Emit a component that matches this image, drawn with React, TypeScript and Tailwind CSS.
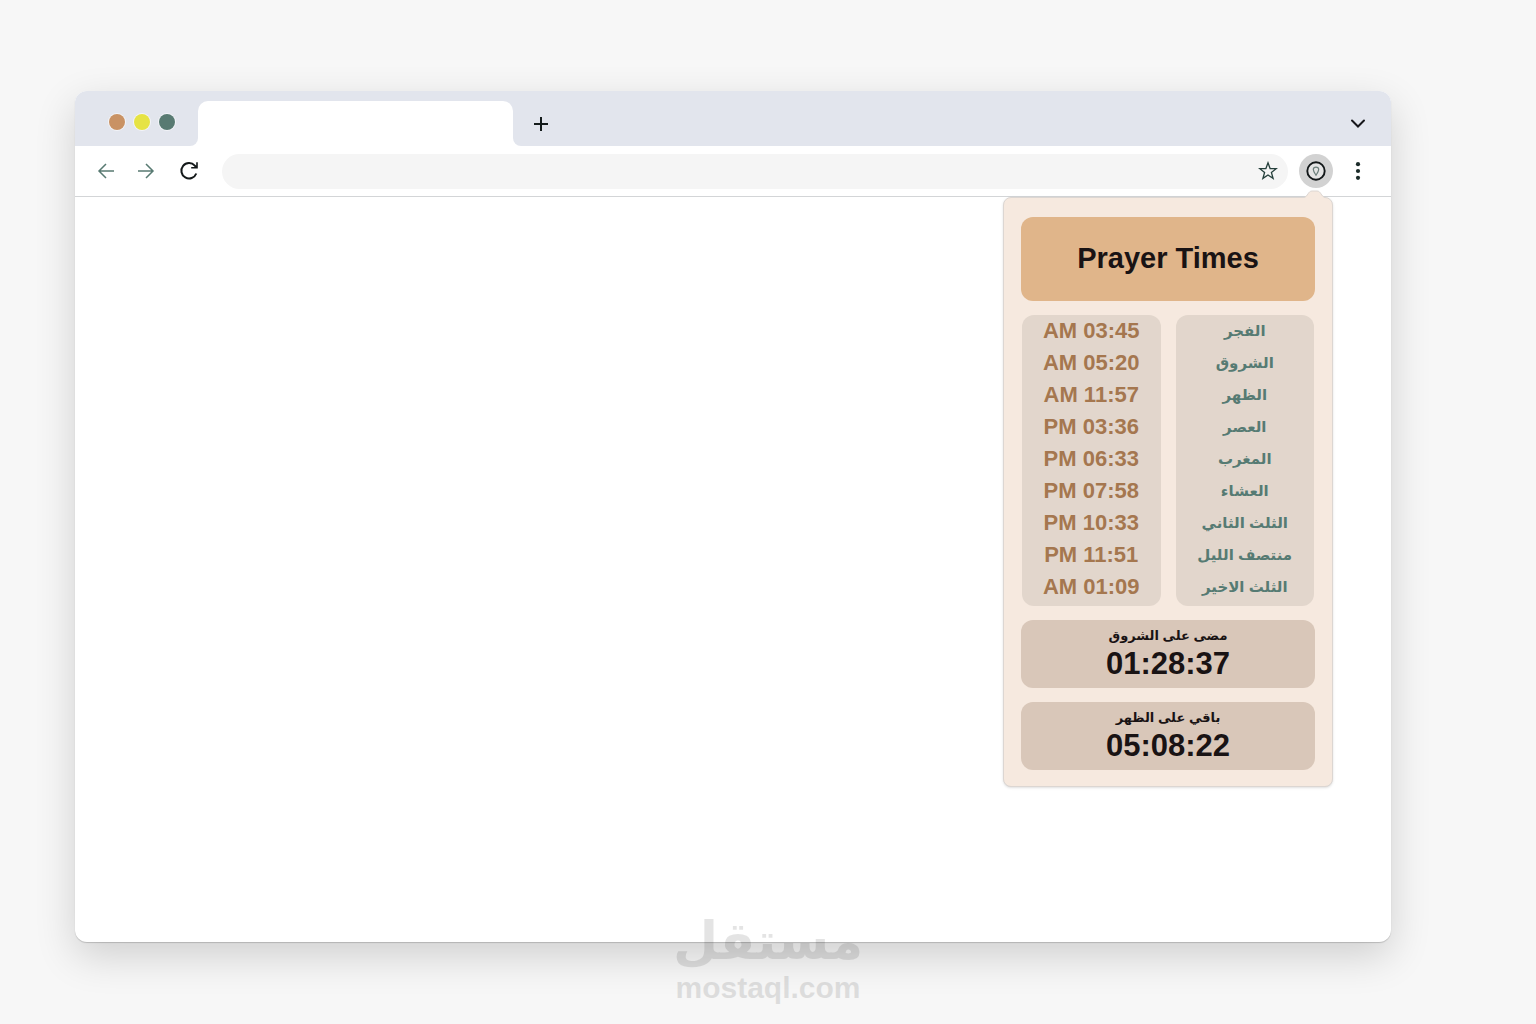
import { useState } from 'react';

const prayers = [
  { name: 'الفجر', time: 'AM 03:45' },
  { name: 'الشروق', time: 'AM 05:20' },
  { name: 'الظهر', time: 'AM 11:57' },
  { name: 'العصر', time: 'PM 03:36' },
  { name: 'المغرب', time: 'PM 06:33' },
  { name: 'العشاء', time: 'PM 07:58' },
  { name: 'الثلث الثاني', time: 'PM 10:33' },
  { name: 'منتصف الليل', time: 'PM 11:51' },
  { name: 'الثلث الاخير', time: 'AM 01:09' },
];

const counters = [
  { label: 'مضى على الشروق', value: '01:28:37' },
  { label: 'باقي على الظهر', value: '05:08:22' },
];

function TabStrip() {
  return (
    <div className="flex h-[55px] rounded-t-xl bg-white">
      <div className="flex w-[123px] items-center gap-[9px] rounded-tl-xl rounded-br-lg bg-[#e2e5ed] pt-[7px] pl-[34px]">
        <span className="h-4 w-4 rounded-full bg-[#c99264] ring-1 ring-white/60" />
        <span className="h-4 w-4 rounded-full bg-[#e6e344] ring-1 ring-white/60" />
        <span className="h-4 w-4 rounded-full bg-[#587a72] ring-1 ring-white/60" />
      </div>
      <div className="w-[315px] bg-[#e2e5ed] pt-[10px]">
        <button aria-label="Tab" className="block h-full w-full rounded-t-[10px] bg-white" />
      </div>
      <div className="flex flex-1 items-center justify-between rounded-tr-xl rounded-bl-lg bg-[#e2e5ed] pt-[10px] pr-6 pl-5">
        <button aria-label="New tab">
          <svg width="16" height="16" viewBox="0 0 16 16" fill="none" stroke="#151c1c" strokeWidth="2">
            <path d="M8 1v14M1 8h14" />
          </svg>
        </button>
        <button aria-label="Search tabs">
          <svg width="18" height="16" viewBox="0 0 18 16" fill="none" stroke="#17171b" strokeWidth="2" strokeLinecap="round">
            <path d="M3 4.500l6 6 6-6" />
          </svg>
        </button>
      </div>
    </div>
  );
}

function Toolbar({ open, onToggle }: { open: boolean; onToggle: () => void }) {
  const [address, setAddress] = useState('');

  return (
    <div className="flex h-[51px] items-center border-b border-[#d3d5d7] bg-white pr-6 pl-[22px]">
      <button aria-label="Back">
        <svg width="18" height="18" viewBox="0 0 18 18" fill="none" stroke="#587a72" strokeWidth="1.5">
          <path d="M17 9H2M9 2L2 9l7 7" />
        </svg>
      </button>
      <button aria-label="Forward" className="ml-[22px]">
        <svg width="18" height="18" viewBox="0 0 18 18" fill="none" stroke="#587a72" strokeWidth="1.5">
          <path d="M1 9h15M9 2l7 7-7 7" />
        </svg>
      </button>
      <button aria-label="Reload" className="ml-6">
        <svg width="20" height="20" viewBox="0 0 20 20" fill="none" stroke="#131819" strokeWidth="2">
          <path d="M17.300 12.500A7.700 7.700 0 1 1 15.800 4.600L17 6" />
          <path d="M18.800 1.300v6.200h-6.600V6h3.400l1.600-1.600V1.300z" fill="#131819" stroke="none" />
        </svg>
      </button>
      <div className="ml-[23px] flex h-[35px] flex-1 items-center rounded-full bg-[#f5f5f5] pr-[10px] pl-4">
        <input
          type="text"
          aria-label="Address"
          value={address}
          onChange={(e) => setAddress(e.target.value)}
          className="min-w-0 flex-1 bg-transparent text-sm outline-none"
        />
        <button aria-label="Bookmark">
          <svg width="20" height="20" viewBox="0 0 20 20" fill="none" stroke="#26403c" strokeWidth="1.3">
            <path d="M10 1.800l2.100 5.700 6.100.2-4.800 3.800 1.700 5.900-5.100-3.400-5.100 3.400 1.700-5.900L1.800 7.700l6.100-.2z" />
          </svg>
        </button>
      </div>
      <button
        aria-label="Prayer times extension"
        onClick={onToggle}
        aria-expanded={open}
        className="ml-[11px] flex h-[34px] w-[34px] items-center justify-center rounded-full bg-[#d2d2d2]"
      >
        <svg width="20" height="20" viewBox="0 0 20 20" fill="none">
          <circle cx="10" cy="10" r="8.7" fill="#e4e4e4" stroke="#131819" strokeWidth="1.9" />
          <path d="M10 14.200C8.400 11.600 7.300 10 7.300 8.400c0-1.400 1.200-2.300 2.700-2.300s2.700.9 2.700 2.300c0 1.600-1.100 3.200-2.700 5.800z" stroke="#6c7f7b" strokeWidth="1.2" />
        </svg>
      </button>
      <button aria-label="Menu" className="ml-4">
        <svg width="18" height="20" viewBox="0 0 18 20" fill="#1b2b29">
          <circle cx="9" cy="3.2" r="2.1" />
          <circle cx="9" cy="10" r="2.1" />
          <circle cx="9" cy="16.8" r="2.1" />
        </svg>
      </button>
    </div>
  );
}

function PrayerPopup() {
  return (
    <div className="absolute top-0 right-[58px] flex w-[330px] flex-col gap-[14px] rounded-lg border border-[#dcd6d2] bg-[#f6e9df] px-[17px] pt-[19px] pb-4 shadow-sm">
      <svg className="absolute -top-2 right-[5px]" width="24" height="10" viewBox="0 0 24 10">
        <path d="M1 7.500C5 6.500 5 1 9 1h5c4 0 4 5.500 8 6.500V10H1z" fill="#f6e9df" />
        <path d="M1 7.500C5 6.500 5 1 9 1h5c4 0 4 5.500 8 6.500" fill="none" stroke="#dcd6d2" />
      </svg>
      <h1 className="flex h-[84px] items-center justify-center rounded-xl bg-[#e0b58a] text-[29px] font-bold text-[#191314]">
        Prayer Times
      </h1>
      <div className="grid grid-cols-2 gap-[15px] px-px text-center font-bold">
        <ul className="rounded-xl bg-[#e2d6cc] pb-[3px] text-[22px] leading-8 text-[#a5774f]">
          {prayers.map((p) => (
            <li key={p.name}>{p.time}</li>
          ))}
        </ul>
        <ul dir="rtl" className="rounded-xl bg-[#e2d6cc] pb-[3px] text-[15px] leading-8 text-[#567b73]">
          {prayers.map((p) => (
            <li key={p.name} className="h-8">{p.name}</li>
          ))}
        </ul>
      </div>
      {counters.map((c) => (
        <div key={c.label} className="flex h-[68px] flex-col items-center justify-center rounded-xl bg-[#d9c7b9] pb-1 font-bold text-[#191314]">
          <p dir="rtl" className="text-[13px] leading-6">{c.label}</p>
          <p className="text-[31px] leading-8">{c.value}</p>
        </div>
      ))}
    </div>
  );
}

function Watermark() {
  return (
    <div className="pointer-events-none absolute inset-x-0 bottom-5 flex flex-col items-center font-bold text-black opacity-10">
      <span dir="rtl" className="text-[52px] leading-[62px]">مستقل</span>
      <span className="text-[30px] leading-8">mostaql.com</span>
    </div>
  );
}

function App() {
  const [open, setOpen] = useState(true);

  return (
    <div className="relative flex min-h-screen flex-col bg-[#f7f7f7] pt-[91px] pr-[145px] pb-[82px] pl-[75px] font-['Liberation_Sans','DejaVu_Sans',sans-serif]">
      <div className="flex flex-1 flex-col rounded-xl bg-white shadow-[0_1px_1px_rgba(0,0,0,0.18),0_14px_40px_rgba(0,0,0,0.16)]">
        <TabStrip />
        <Toolbar open={open} onToggle={() => setOpen(!open)} />
        <main className="relative flex-1">{open && <PrayerPopup />}</main>
      </div>
      <Watermark />
    </div>
  );
}

export default App;
